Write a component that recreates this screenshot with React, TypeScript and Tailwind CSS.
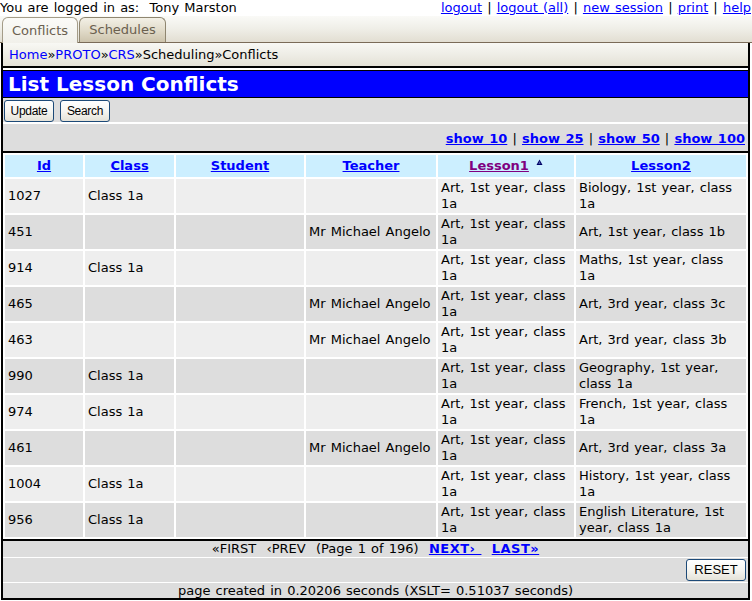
import React from "react";

const rows: string[][] = [
  ["1027", "Class 1a", "", "", "Art, 1st year, class 1a", "Biology, 1st year, class 1a"],
  ["451", "", "", "Mr Michael Angelo", "Art, 1st year, class 1a", "Art, 1st year, class 1b"],
  ["914", "Class 1a", "", "", "Art, 1st year, class 1a", "Maths, 1st year, class 1a"],
  ["465", "", "", "Mr Michael Angelo", "Art, 1st year, class 1a", "Art, 3rd year, class 3c"],
  ["463", "", "", "Mr Michael Angelo", "Art, 1st year, class 1a", "Art, 3rd year, class 3b"],
  ["990", "Class 1a", "", "", "Art, 1st year, class 1a", "Geography, 1st year, class 1a"],
  ["974", "Class 1a", "", "", "Art, 1st year, class 1a", "French, 1st year, class 1a"],
  ["461", "", "", "Mr Michael Angelo", "Art, 1st year, class 1a", "Art, 3rd year, class 3a"],
  ["1004", "Class 1a", "", "", "Art, 1st year, class 1a", "History, 1st year, class 1a"],
  ["956", "Class 1a", "", "", "Art, 1st year, class 1a", "English Literature, 1st year, class 1a"],
];

const headers = [
  { label: "Id", w: "w-[78px]" },
  { label: "Class", w: "w-[89px]" },
  { label: "Student", w: "w-[128px]" },
  { label: "Teacher", w: "w-[130px]" },
  { label: "Lesson1", w: "w-[136px]" },
  { label: "Lesson2", w: "w-[170px]" },
];

function SortArrow() {
  return (
    <svg width="7" height="7" viewBox="0 0 7 7" className="inline-block align-top ml-[7px] mt-[1px]">
      <polygon points="3.5,0.5 6.5,6 0.5,6" fill="#000066" />
      <polygon points="3.5,2 4.6,5 2.4,5" fill="#4a5aa8" />
    </svg>
  );
}

function XpButton({ children, w }: { children: React.ReactNode; w: string }) {
  return (
    <button
      className={`${w} h-[22px] rounded-[3px] border border-[#1d4a78] bg-linear-to-b from-white via-[#f6f6f2] to-[#e4e2d8] text-[12px] leading-[20px] text-black font-['Liberation_Sans',sans-serif] tracking-[-0.3px]`}
    >
      {children}
    </button>
  );
}

export default function App() {
  return (
    <div className="w-[752px] h-[601px] bg-white text-black text-[13px] font-['DejaVu_Sans',sans-serif] [word-spacing:1px] overflow-hidden">
      {/* top line */}
      <div className="h-[16px] leading-[15px] flex justify-between pr-[1px]">
        <span>You are logged in as:&nbsp; Tony Marston</span>
        <span>
          <a className="text-[#0000ff] underline">logout</a> |{" "}
          <a className="text-[#0000ff] underline">logout (all)</a> |{" "}
          <a className="text-[#0000ff] underline">new session</a> |{" "}
          <a className="text-[#0000ff] underline">print</a> |{" "}
          <a className="text-[#0000ff] underline">help</a>
        </span>
      </div>

      {/* tab bar */}
      <div className="h-[27px] border-b border-[#7a6b58] bg-linear-to-b from-[#fafaf7] via-[#efeee7] to-[#e2ded2] flex items-end pl-[2px] gap-[1px]">
        <div className="w-[76px] h-[26px] -mb-[1px] rounded-t-[6px] border border-b-0 border-[#a49c88] bg-linear-to-b from-[#fbfbf8] to-[#f1f0ea] text-[#6a604f] flex items-center justify-center leading-[16px]">
          Conflicts
        </div>
        <div className="w-[87px] h-[25px] rounded-t-[6px] border border-b-0 border-[#8f8670] bg-linear-to-b from-[#f3f0e6] via-[#e2dccb] to-[#cdc4ad] text-[#6a604f] flex items-center justify-center leading-[16px]">
          Schedules
        </div>
      </div>

      {/* main box */}
      <div className="ml-[1px] w-[749px] border-x-2 border-b-2 border-black">
        {/* breadcrumb */}
        <div className="h-[25px] border-b-2 border-black bg-linear-to-b from-[#f8f8f4] via-[#eeede6] to-[#e4e1d6] pl-[6px] leading-[23px]">
          <a className="text-[#0000ff]">Home</a>»<a className="text-[#0000ff]">PROTO</a>»
          <a className="text-[#0000ff]">CRS</a>»Scheduling»Conflicts
        </div>

        <div className="h-[2px]" />

        {/* title */}
        <div className="h-[28px] border-y border-black bg-[#0000ff] text-white font-bold text-[20px] leading-[27px] pl-[5px] [word-spacing:0px]">
          List Lesson Conflicts
        </div>

        {/* buttons */}
        <div className="h-[24px] bg-[#dddddd] flex gap-[6px] pl-[1px] pt-[2px]">
          <XpButton w="w-[50px]">Update</XpButton>
          <XpButton w="w-[50px]">Search</XpButton>
        </div>
        <div className="h-[2px]" />

        {/* show row */}
        <div className="h-[29px] bg-[#dddddd] border-b-2 border-black text-right pr-[3px] pt-[7px] leading-[16px]">
          <a className="text-[#0000ff] underline font-bold">show 10</a> |{" "}
          <a className="text-[#0000ff] underline font-bold">show 25</a> |{" "}
          <a className="text-[#0000ff] underline font-bold">show 50</a> |{" "}
          <a className="text-[#0000ff] underline font-bold">show 100</a>
        </div>

        {/* table */}
        <table className="w-[745px] table-fixed border-separate border-spacing-[2px] bg-white">
          <thead>
            <tr>
              {headers.map((h) => (
                <th
                  key={h.label}
                  className={`${h.w} h-[22px] bg-[#ccefff] text-center font-bold p-0 leading-[16px]`}
                >
                  <a className={`underline ${h.label === "Lesson1" ? "text-[#800080]" : "text-[#0000ff]"}`}>
                    {h.label}
                  </a>
                  {h.label === "Lesson1" && <SortArrow />}
                </th>
              ))}
            </tr>
          </thead>
          <tbody>
            {rows.map((r, i) => (
              <tr key={i} className={i % 2 === 0 ? "bg-[#eeeeee]" : "bg-[#dddddd]"}>
                {r.map((c, j) => (
                  <td key={j} className="h-[34px] px-[3px] py-[1px] leading-[16px] align-middle text-left">
                    {c}
                  </td>
                ))}
              </tr>
            ))}
          </tbody>
        </table>

        {/* pager */}
        <div className="border-t-2 border-black">
          <div className="h-[16px] bg-[#dddddd] text-center leading-[16px]">
            «FIRST&nbsp;&nbsp;‹PREV&nbsp;&nbsp;(Page 1 of 196)&nbsp;&nbsp;
            <a className="text-[#0000ff] underline font-bold tracking-[0.5px]">NEXT›&nbsp;</a>&nbsp;&nbsp;
            <a className="text-[#0000ff] underline font-bold tracking-[0.5px]">LAST»</a>
          </div>
          <div className="h-[1px]" />
          <div className="h-[24px] bg-[#dddddd] flex justify-end pr-[2px] pt-[1px]">
            <button className="w-[60px] h-[22px] rounded-[3px] border border-[#1d4a78] bg-linear-to-b from-white via-[#f6f6f2] to-[#e4e2d8] text-[13px] leading-[20px] font-['Liberation_Sans',sans-serif]">
              RESET
            </button>
          </div>
          <div className="h-[1px]" />
          <div className="h-[15px] bg-[#dddddd] text-center leading-[15px]">
            page created in 0.20206 seconds (XSLT= 0.51037 seconds)
          </div>
        </div>
      </div>
    </div>
  );
}
